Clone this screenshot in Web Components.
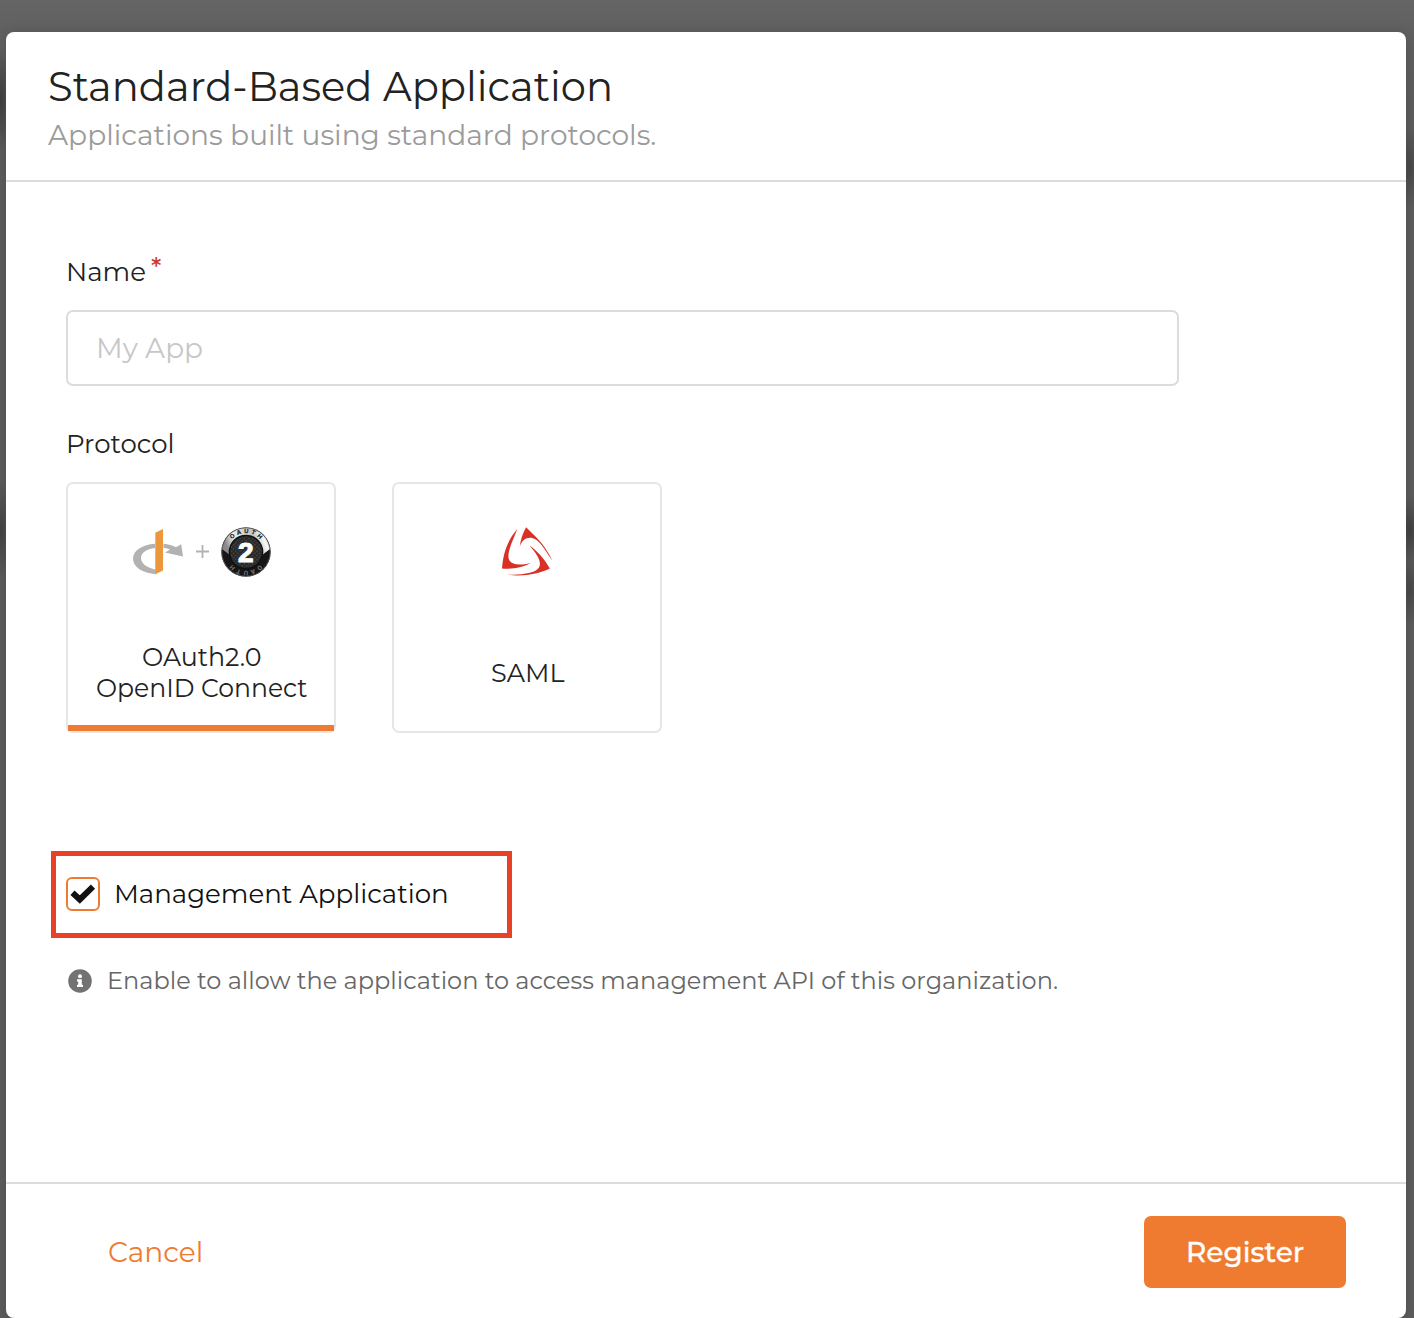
<!DOCTYPE html>
<html lang="en">
<head>
<meta charset="utf-8">
<title>Standard-Based Application</title>
<style>
html,body{margin:0;height:1318px;overflow:hidden}
body{font-family:Montserrat,Inter,sans-serif;color:#222}
</style>
</head>
<body>
<app-dialog>
  <ui-text slot="title" width="565" size="41" line="48">Standard-Based Application</ui-text>
  <ui-text slot="subtitle" width="608.3" size="28" line="34" style="color:#9b9b9b">Applications built using standard protocols.</ui-text>
  <text-field placeholder="My App" required><ui-text width="80" size="26" line="36">Name</ui-text></text-field>
  <protocol-picker></protocol-picker>
  <check-option></check-option>
  <hint-line><ui-text width="951" size="24" line="30">Enable to allow the application to access management API of this organization.</ui-text></hint-line>
  <ui-button slot="actions" kind="link"><ui-text width="95.3" size="28" line="36">Cancel</ui-text></ui-button>
  <ui-button slot="actions" kind="primary"><ui-text width="118.3" size="28" line="36" weight="500" style="-webkit-text-stroke:.3px #fff">Register</ui-text></ui-button>
</app-dialog>
<script>
const define = (name, html, setup) => customElements.define(name, class extends HTMLElement {
  connectedCallback() {
    if (this.shadowRoot) return;
    this.attachShadow({mode: 'open'}).innerHTML = html;
    if (setup) setup(this, this.shadowRoot);
  }
});

/* Single line of text stretched to a fixed measure. */
define('ui-text', `<style>
:host{display:block;white-space:nowrap;flex:none}
span{display:inline-block;transform-origin:0 50%;vertical-align:top}
</style><span><slot></slot></span>`, (el, root) => {
  const span = root.querySelector('span');
  const n = k => parseFloat(el.getAttribute(k) || 0);
  el.style.fontSize = n('size') + 'px';
  el.style.lineHeight = n('line') + 'px';
  el.style.height = n('line') + 'px';
  el.style.width = n('width') + 'px';
  el.style.fontWeight = n('weight') || 400;
  const natural = span.offsetWidth ? span.getBoundingClientRect().width : 1;
  span.style.transform = `scaleX(${n('width') / natural})`;
});

define('app-dialog', `<style>
:host{display:block;box-sizing:border-box;height:1318px;padding:32px 8px 0 6px;
 background:
 radial-gradient(ellipse 12px 52px at 0 100px,#3e3e3e,transparent),
 radial-gradient(ellipse 12px 50px at 0 530px,#424242,transparent),
 radial-gradient(ellipse 12px 40px at 1410px 168px,#484848,transparent),
 radial-gradient(ellipse 14px 34px at 1410px 530px,#404040,transparent),
 radial-gradient(ellipse 14px 34px at 1410px 590px,#484848,transparent),
 linear-gradient(#656565 0,#606060 32px,#5c5c5c 110px,#5c5c5c)}
section{display:flex;flex-direction:column;box-sizing:border-box;height:1286px;background:#fff;border-radius:8px;box-shadow:0 2px 12px rgba(0,0,0,.16)}
header{box-sizing:border-box;height:150px;padding:30px 42px 0;border-bottom:2px solid #dcdcdc;display:flex;flex-direction:column;gap:8px}
main{flex:1;padding:72px 60px 0;display:flex;flex-direction:column;align-items:flex-start}
footer{box-sizing:border-box;height:136px;border-top:2px solid #dcdcdc;padding:32px 60px 30px;display:flex;justify-content:space-between}
</style><section><header><slot name="title"></slot><slot name="subtitle"></slot></header><main><slot></slot></main><footer><slot name="actions"></slot></footer></section>`);

define('text-field', `<style>
:host{display:flex;flex-direction:column;gap:20px;width:1113px}
.label{display:flex;gap:5px;height:36px}
.box{box-sizing:border-box;height:76px;border:2px solid #dcdcdc;border-radius:7px;padding:18px 28px;color:#c7c7c7}
sup{color:#d0362b;font-size:26px;line-height:30px;height:30px;vertical-align:top;margin:-2px 0 0 0;font-weight:500}
</style><div class="label"><slot></slot><sup>*</sup></div><div class="box"><ui-text width="107" size="28" line="36">My App</ui-text></div>`);

define('openid-logo', `<style>:host{display:block;width:50px;height:48px}svg{display:block}</style>
<svg width="50" height="48" viewBox="0 .5 50 48">
<path fill="#b2b2b2" d="M22 16.2V20.5C13.5 21.5 8 25.3 8 30.6S13.5 40.5 23 42.2V46.7C9.5 45.5 0 39.4 0 31.2S9.2 17 22 16.2ZM30.5 16.2C35.4 16.6 39.7 17.9 43 19.8L48.2 16.7L50 28.9L32 25L37.1 22.1C35.2 21.2 33 20.6 30.5 20.3Z"/>
<path fill="#eb983d" d="M22.3 5.2L30 1.5V43.1L22.3 46.8Z"/></svg>`);

define('oauth-badge', `<style>:host{display:block;width:50px;height:50px}svg{display:block;overflow:visible}text{font-family:Inter,sans-serif}.two{font-family:"Liberation Sans",sans-serif}</style>
<svg width="50" height="50" viewBox="0 0 50 50"><defs>
<linearGradient id="rim" x1="0" y1=".2" x2="1" y2="0"><stop offset="0" stop-color="#8a8a8a"/><stop offset=".2" stop-color="#eee"/><stop offset=".6" stop-color="#c4c4c4"/><stop offset=".8" stop-color="#f8f8f8"/><stop offset="1" stop-color="#aaa"/></linearGradient>
<pattern id="mesh" width="3" height="3" patternUnits="userSpaceOnUse" patternTransform="rotate(45)"><rect width="3" height="3" fill="#292929"/><rect width="1.2" height="1.2" fill="#555"/></pattern>
<path id="arc" d="M6.2 25A18.8 18.8 0 0 1 43.8 25"/></defs>
<circle cx="25" cy="25" r="24.6" fill="#161616"/>
<path d="M.8 22A24.4 24.4 0 0 1 49.2 22C47.6 22.8 44 26 42 27.5H8C6 26 2.4 22.8 .8 22Z" fill="url(#rim)"/>
<circle cx="25" cy="25" r="24.2" fill="none" stroke="#555" stroke-width=".9"/>
<circle cx="25" cy="25" r="16.6" fill="url(#mesh)" stroke="#111" stroke-width="1.5"/>
<text font-size="6" font-weight="800" fill="#262626" letter-spacing="2.4"><textPath href="#arc" startOffset="52%" text-anchor="middle">OAUTH</textPath></text>
<g transform="rotate(180 25 25)"><text font-size="6" font-weight="700" fill="#777" letter-spacing="2.4"><textPath href="#arc" startOffset="52%" text-anchor="middle">OAUTH</textPath></text></g>
<text class="two" x="24.8" y="34.5" text-anchor="middle" font-size="28" font-weight="700" fill="#fff" stroke="#fff" stroke-width="1.1">2</text></svg>`);

define('saml-logo', `<style>:host{display:block;width:50px;height:49px;margin:0 .5px 0 0}svg{display:block}</style>
<svg width="50" height="49" viewBox="0 0 50 49"><g fill="#d93025">
<path d="M24.1 .3C30 6.5 43.2 17 50.2 33.5C44.5 25.8 40.2 16.5 33.4 12.3C27.7 8.8 20.2 11 17.7 20C18.5 13 20.8 5.8 24.1 .3Z"/>
<path d="M15.5 1.8C3.3 15.8 1 30 0 41.5C9.5 42.6 22 40.2 28.5 36C18.8 38.4 10.2 38.4 7.3 33.2C4.1 27.3 10.3 14.5 15.5 1.8Z"/>
<path d="M27.5 18.7C33.8 22.2 42.4 31.6 47.9 41.6C37.5 46.8 20 50.3 5.5 47.7C17.5 47.6 31.6 47 36.4 41.2C41 35.6 34.5 26.2 27.5 18.7Z"/></g></svg>`);

define('protocol-card', `<style>
:host{display:flex;flex-direction:column;box-sizing:border-box;width:270px;height:251px;border:2px solid #e6e6e6;border-radius:7px}
.logo{height:50px;margin-top:42.5px;display:flex;justify-content:center;align-items:center}
.name{height:62px;margin-top:65.5px;padding-left:1.5px;display:flex;flex-direction:column;justify-content:center;align-items:center}
.bar{height:6px;margin-top:auto}
:host([selected]) .bar{background:#ef7b31}
</style><div class="logo"><slot name="logo"></slot></div><div class="name"><slot></slot></div><div class="bar"></div>`);

define('protocol-picker', `<style>
:host{display:flex;flex-direction:column;gap:20px;margin-top:40px}
.cards{display:flex;gap:56px}
.pair{display:flex;align-items:center;gap:12.5px;padding-left:2px}
.pair svg{display:block}
</style><ui-text width="108.5" size="26" line="36">Protocol</ui-text>
<div class="cards"><protocol-card selected><div class="pair" slot="logo"><openid-logo></openid-logo><svg width="13" height="13" viewBox="0 0 13 13"><path d="M6.5 0V13M0 6.5H13" stroke="#b2b2b2" stroke-width="1.8"/></svg><oauth-badge></oauth-badge></div>
<ui-text width="119.5" size="26" line="31">OAuth2.0</ui-text><ui-text width="211.5" size="26" line="31">OpenID Connect</ui-text></protocol-card>
<protocol-card><saml-logo slot="logo"></saml-logo><ui-text width="73.5" size="26" line="31">SAML</ui-text></protocol-card></div>`);

define('check-option', `<style>
:host{display:flex;align-items:center;box-sizing:border-box;width:461px;height:87px;margin:117.5px 0 0 -15.5px;padding-left:10.5px;border:5px solid #e84127;color:#111}
.box{box-sizing:border-box;width:34px;height:34px;border:2px solid #ef7b31;border-radius:6px;margin-right:13.7px}
svg{display:block}
</style><div class="box"><svg width="30" height="30" viewBox="0 0 30 30"><path d="M5 15.2L12.3 22L25.5 9.2" transform="translate(-.5 -1.5)" fill="none" stroke="#111" stroke-width="6" stroke-linejoin="miter"/></svg></div>
<ui-text width="334.7" size="26" line="36">Management Application</ui-text>`);

define('hint-line', `<style>
:host{display:flex;align-items:center;height:30px;margin-top:28px;padding-left:2px;gap:15px;color:#666}
svg{display:block;flex:none}
</style><svg width="24" height="24" viewBox="0 0 24 24"><circle cx="12" cy="12" r="11.8" fill="#737373"/><circle cx="12" cy="7.2" r="2" fill="#fff"/><path fill="#fff" d="M9 10.3H13.8V15.8H15V18H9V15.8H10.2V12.5H9Z"/></svg><slot></slot>`);

define('ui-button', `<style>
:host{display:flex;align-items:center;justify-content:center;box-sizing:border-box;height:72px}
:host([kind=link]){color:#ef7b31;padding-left:41.5px}
:host([kind=primary]){width:202px;background:#ef7b31;color:#fff;border-radius:7px}
</style><slot></slot>`);
</script>
</body>
</html>
